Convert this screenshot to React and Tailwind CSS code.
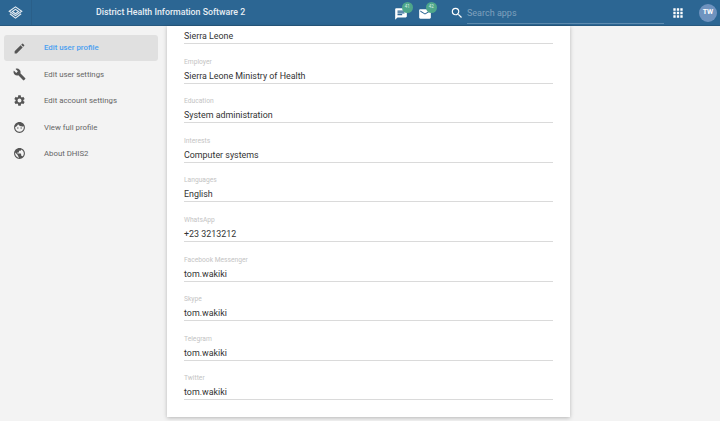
import { MdApps, MdBuild, MdChat, MdEdit, MdEmail, MdFace, MdPublic, MdSearch, MdSettings } from "react-icons/md";

const navItems = [
  { label: "Edit user profile", icon: MdEdit, active: true },
  { label: "Edit user settings", icon: MdBuild },
  { label: "Edit account settings", icon: MdSettings },
  { label: "View full profile", icon: MdFace },
  { label: "About DHIS2", icon: MdPublic },
];

const fields = [
  { label: "Employer", value: "Sierra Leone Ministry of Health" },
  { label: "Education", value: "System administration" },
  { label: "Interests", value: "Computer systems" },
  { label: "Languages", value: "English" },
  { label: "WhatsApp", value: "+23 3213212" },
  { label: "Facebook Messenger", value: "tom.wakiki" },
  { label: "Skype", value: "tom.wakiki" },
  { label: "Telegram", value: "tom.wakiki" },
  { label: "Twitter", value: "tom.wakiki" },
];

function Logo() {
  return (
    <svg className="w-[15px] h-[15px]" viewBox="0 0 24 24" fill="none" stroke="#e6edf3" strokeWidth="1.8">
      <path d="M12 3 L22 10 L12 17 L2 10 Z" />
      <path d="M12 7 L17 10.5 L12 14 L7 10.5 Z" />
      <path d="M3 14 L12 21 L21 14" />
    </svg>
  );
}

function Badge({ icon: Icon, count }) {
  return (
    <div className="relative w-[14px] h-[16px]">
      <Icon className="w-[14px] h-[14px] text-white mt-[2px]" />
      <span className="absolute left-[8px] -top-[2.5px] w-[10.5px] h-[10.5px] rounded-full bg-[#4ea68a] text-[4.5px] text-[#d8efe6] flex items-center justify-center">
        {count}
      </span>
    </div>
  );
}

function Field({ label, value }) {
  return (
    <div className="h-[39.6px] flex flex-col justify-end">
      <div className="text-[6.7px] leading-[9px] text-[#c4c4c4]">{label}</div>
      <div className="text-[8.9px] leading-[13px] mt-[3px] text-[#333333] border-b border-[#dadada]">{value}</div>
    </div>
  );
}

export default function App() {
  return (
    <div className="h-[421px] w-[720px] flex flex-col overflow-hidden bg-[#f3f3f3]" style={{ fontFamily: "Roboto, sans-serif" }}>
      <header className="h-[26px] shrink-0 flex items-center bg-[#2c6693] border-b border-[#27597f] text-white">
        <div className="w-[32px] h-full flex items-center justify-center border-r border-[#2a5f89]">
          <Logo />
        </div>
        <div className="w-[362px] pl-[64px] text-[8.8px] font-medium text-[#e8eef3] whitespace-nowrap">District Health Information Software 2</div>
        <div className="flex items-center gap-[10px] w-[52px]">
          <Badge icon={MdChat} count="41" />
          <Badge icon={MdEmail} count="42" />
        </div>
        <div className="flex items-center ml-[4px]">
          <MdSearch className="w-[14px] h-[14px] text-white" />
          <div className="w-[197px] ml-[3px] text-[9px] leading-[20px] h-[21px] mt-[2px] text-[#7fa1bd] border-b border-[#5f8cb0]">Search apps</div>
        </div>
        <MdApps className="w-[14px] h-[14px] ml-[7px] text-white" />
        <div className="w-[18px] h-[18px] ml-[14px] rounded-full bg-[#6f93bf] text-[7px] font-bold text-white flex items-center justify-center">TW</div>
      </header>
      <div className="flex flex-1 min-h-0">
        <nav className="w-[167px] shrink-0 pt-[9px] pl-[4px] pr-[9px]">
          {navItems.map(({ label, icon: Icon, active }) => (
            <div key={label} className={`h-[26.4px] flex items-center rounded-[3px] ${active ? "bg-[#e0e0e0]" : ""}`}>
              <Icon className="w-[13px] h-[13px] ml-[9px] text-[#555555]" />
              <span className={`ml-[18px] text-[7.8px] ${active ? "text-[#4a9ff0] font-medium" : "text-[#666666]"}`}>{label}</span>
            </div>
          ))}
        </nav>
        <main className="w-[403px] h-[391px] shrink-0 bg-white shadow-[0_1px_4px_rgba(0,0,0,0.25)] px-[17px]">
          <div className="text-[8.9px] leading-[13px] pt-[4px] text-[#333333] border-b border-[#dadada]">Sierra Leone</div>
          {fields.map((field) => (
            <Field key={field.label} {...field} />
          ))}
        </main>
      </div>
    </div>
  );
}
